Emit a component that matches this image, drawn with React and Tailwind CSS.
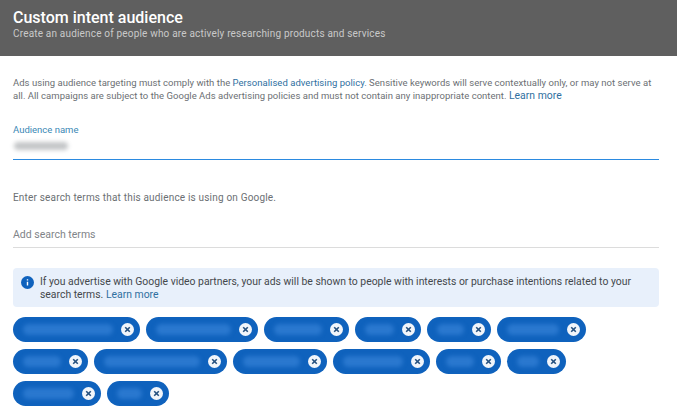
const chipsData = [
  { id: 1, width: "w-[127px]" },
  { id: 2, width: "w-[112px]" },
  { id: 3, width: "w-[85px]" },
  { id: 4, width: "w-[66px]" },
  { id: 5, width: "w-[64px]" },
  { id: 6, width: "w-[89px]" },
  { id: 7, width: "w-[75px]" },
  { id: 8, width: "w-[133px]" },
  { id: 9, width: "w-[94px]" },
  { id: 10, width: "w-[97px]" },
  { id: 11, width: "w-[65px]" },
  { id: 12, width: "w-[59px]" },
  { id: 13, width: "w-[88px]" },
  { id: 14, width: "w-[62px]" },
];

function Chip({ width }) {
  return (
    <div className={`${width} h-[25px] flex items-center rounded-full bg-[#0f62bd] pl-[10px] pr-[6px]`}>
      <span className="flex-1 h-[11px] mr-[8px] rounded-full bg-[#2a78cf] blur-[2px]"></span>
      <svg width="13" height="13" viewBox="0 0 13 13" className="shrink-0">
        <circle cx="6.5" cy="6.5" r="6.5" fill="#f1f5fa" />
        <path d="M4.2 4.2l4.6 4.6M8.8 4.2l-4.6 4.6" stroke="#24507f" strokeWidth="1.6" />
      </svg>
    </div>
  );
}

export default function App() {
  return (
    <div className="w-[677px] h-[415px] overflow-hidden bg-white font-['Roboto',sans-serif] text-[#6b6f73]">
      <header className="h-[56px] bg-[#5f5f5f] px-[13px] pt-[8px]">
        <h1 className="text-[16px] leading-[19px] font-medium text-white">Custom intent audience</h1>
        <p className="text-[10px] leading-[14px] tracking-[0.18px] text-[#c9c9c9]">
          Create an audience of people who are actively researching products and services
        </p>
      </header>

      <main className="pl-[13px] pr-[18px]">
        <p className="pt-[20px] text-[9.5px] leading-[13px] tracking-[0.03px]">
          Ads using audience targeting must comply with the <span className="text-[#2f6f9f]">Personalised advertising policy.</span> Sensitive keywords will serve contextually only, or may not serve at all. All campaigns are subject to the Google Ads advertising policies and must not contain any inappropriate content. <span className="text-[#2f6f9f] text-[10.4px]">Learn more</span>
        </p>

        <div className="mt-[21px] h-[37px] border-b border-[#2b8ae0]">
          <div className="text-[9.5px] leading-[13px] text-[#3b88b5]">Audience name</div>
          <div className="mt-[6px] ml-[1px] w-[54px] h-[8px] rounded-full bg-[#c4c6c8] blur-[2px]"></div>
        </div>

        <p className="mt-[31px] text-[10px] leading-[13px] tracking-[0.18px]">
          Enter search terms that this audience is using on Google.
        </p>

        <div className="mt-[24px] h-[20px] border-b border-[#dcdcdc] text-[10.5px] leading-[13px] text-[#808488]">
          Add search terms
        </div>

        <div className="mt-[20px] h-[39px] flex rounded-[4px] bg-[#e8f0fb] pl-[8px] pt-[8px] text-[10.4px] leading-[12.5px] text-[#44484c]">
          <svg width="13" height="13" viewBox="0 0 13 13" className="shrink-0">
            <circle cx="6.5" cy="6.5" r="6.5" fill="#0f62bd" />
            <path d="M6.5 5.8v3.8M6.5 3.3v1.3" stroke="#ffffff" strokeWidth="1.4" />
          </svg>
          <p className="ml-[6px] w-[600px]">
            If you advertise with Google video partners, your ads will be shown to people with interests or purchase intentions related to your search terms. <span className="text-[#2f6f9f]">Learn more</span>
          </p>
        </div>

        <div className="mt-[10px] flex flex-wrap gap-x-[6px] gap-y-[7px]">
          {chipsData.map((chip) => (
            <Chip key={chip.id} width={chip.width} />
          ))}
        </div>
      </main>
    </div>
  );
}
